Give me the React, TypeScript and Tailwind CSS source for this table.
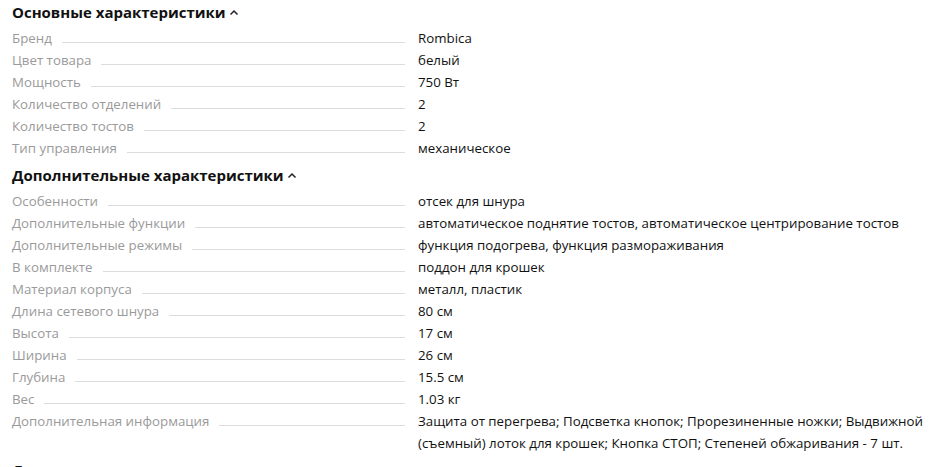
import React from "react";

type Row = [string, string];

const sections: { title: string; rows: Row[] }[] = [
  {
    title: "Основные характеристики",
    rows: [
      ["Бренд", "Rombica"],
      ["Цвет товара", "белый"],
      ["Мощность", "750 Вт"],
      ["Количество отделений", "2"],
      ["Количество тостов", "2"],
      ["Тип управления", "механическое"],
    ],
  },
  {
    title: "Дополнительные характеристики",
    rows: [
      ["Особенности", "отсек для шнура"],
      ["Дополнительные функции", "автоматическое поднятие тостов, автоматическое центрирование тостов"],
      ["Дополнительные режимы", "функция подогрева, функция размораживания"],
      ["В комплекте", "поддон для крошек"],
      ["Материал корпуса", "металл, пластик"],
      ["Длина сетевого шнура", "80 см"],
      ["Высота", "17 см"],
      ["Ширина", "26 см"],
      ["Глубина", "15.5 см"],
      ["Вес", "1.03 кг"],
      [
        "Дополнительная информация",
        "Защита от перегрева; Подсветка кнопок; Прорезиненные ножки; Выдвижной (съемный) лоток для крошек; Кнопка СТОП; Степеней обжаривания - 7 шт.",
      ],
    ],
  },
];

function Chevron() {
  return (
    <svg width="10" height="7" viewBox="0 0 10 7" className="ml-[3px] mt-[1px]">
      <path d="M1.5 5.5 L5 2 L8.5 5.5" fill="none" stroke="#222" strokeWidth="1.5" />
    </svg>
  );
}

function Heading({ title }: { title: string }) {
  return (
    <div className="flex items-center h-[24px] text-[15px] font-bold text-[#111]">
      <span>{title}</span>
      <Chevron />
    </div>
  );
}

export default function App() {
  return (
    <div
      className="bg-white w-[931px] h-[467px] overflow-hidden pl-[12px] pr-0"
      style={{ fontFamily: '"Open Sans", "Noto Sans", sans-serif' }}
    >
      {sections.map((s, si) => (
        <div key={si} className={si === 0 ? "" : "mt-[4px]"}>
          <Heading title={s.title} />
          <div className="mt-[3px] flex flex-col">
            {s.rows.map(([k, v], i) => (
              <div key={i} className="grid grid-cols-[393px_1fr] gap-x-[13px] text-[13.3px] leading-[22px]">
                <div className="flex items-start h-[22px]">
                  <span className="text-[#9a9a9a] whitespace-nowrap">{k}</span>
                  <span className="flex-1 border-b border-[#dcdcdc] h-[16px] ml-[10px]" />
                </div>
                <div className="text-[#111]">{v}</div>
              </div>
            ))}
          </div>
        </div>
      ))}
      <div className="mt-[4px]">
        <Heading title="Дополнительно" />
      </div>
    </div>
  );
}
